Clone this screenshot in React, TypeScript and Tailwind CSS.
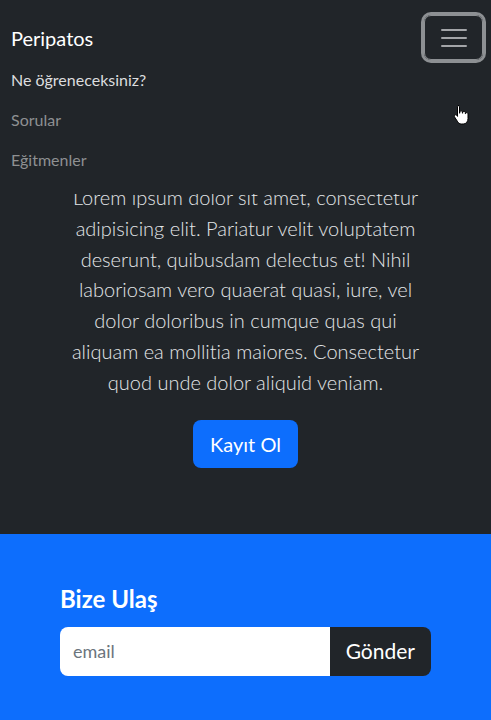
import React from 'react';

const font = { fontFamily: 'Lato, "Open Sans", sans-serif' };

function HandCursor() {
  return (
    <svg viewBox="0 0 16 22" className="absolute left-[453px] top-[104px] h-[22px] w-[16px]" aria-hidden="true">
      <path
        d="M5 1.5c.8 0 1.5.6 1.5 1.5v6.2h.3V8c0-.8.6-1.3 1.3-1.3s1.3.5 1.3 1.3v1.2h.3v-.7c0-.8.6-1.3 1.3-1.3s1.3.5 1.3 1.3v1.2h.3c0-.8.6-1.2 1.2-1.2s1.2.5 1.2 1.3v4.7c0 3-1.8 5.5-4.8 5.5H8.3c-1.7 0-2.7-.9-3.6-2.2L1.6 13c-.5-.7-.3-1.6.4-2 .6-.4 1.4-.2 1.8.4l.7 1V3c0-.9.7-1.5 1.5-1.5z"
        fill="#fff"
        stroke="#000"
        strokeWidth="1"
      />
    </svg>
  );
}

function Navbar() {
  return (
    <nav className="absolute left-0 right-0 top-0 bg-[#212529] px-[11px] pb-[14px] pt-[15px]">
      <div className="flex items-center justify-between">
        <span className="text-[20px] leading-[30px] text-white">Peripatos</span>
        <button className="mr-[-3px] flex h-[45px] w-[59px] items-center justify-center rounded-[7px] border border-[#8d9093] ring-[3px] ring-[#8d9093]">
          <svg viewBox="0 0 30 30" className="h-[30px] w-[30px]" aria-hidden="true">
            <path d="M3 7h24M3 15h24M3 23h24" stroke="#a3a5a8" strokeWidth="2" strokeLinecap="round" />
          </svg>
        </button>
      </div>
      <ul className="flex flex-col text-[16px]">
        <li className="py-[8px] leading-[24px] text-[#dcdddf]">Ne öğreneceksiniz?</li>
        <li className="py-[8px] leading-[24px] text-[#8e9092]">Sorular</li>
        <li className="py-[8px] leading-[24px] text-[#8e9092]">Eğitmenler</li>
      </ul>
    </nav>
  );
}

export default function App() {
  return (
    <div className="relative min-h-[720px] w-full overflow-hidden bg-[#0d6efd] [font-variant-ligatures:none]" style={font}>
      <section className="bg-[#212529] pb-[66px] pt-[182px] text-center">
        <p className="mx-auto w-[360px] text-[20px] font-light leading-[30.8px] text-[#e3e5e8]">
          Lorem ipsum dolor sit amet, consectetur adipisicing elit. Pariatur velit voluptatem deserunt, quibusdam
          delectus et! Nihil laboriosam vero quaerat quasi, iure, vel dolor doloribus in cumque quas qui aliquam ea
          mollitia maiores. Consectetur quod unde dolor aliquid veniam.
        </p>
        <button className="mt-[22px] h-[48px] rounded-[8px] bg-[#0d6efd] px-[17px] text-[20px] text-white">
          Kayıt Ol
        </button>
      </section>
      <section className="px-[60px] pb-[48px] pt-[50px]">
        <h3 className="mb-[14px] text-[24px] font-bold leading-[29px] text-white">Bize Ulaş</h3>
        <div className="flex h-[49px] w-[371px]">
          <input
            placeholder="email"
            className="min-w-0 flex-1 rounded-l-[8px] bg-white px-[13px] text-[18px] text-gray-900 outline-none placeholder:text-[#6c757d]"
          />
          <button className="rounded-r-[8px] bg-[#212529] px-[16px] text-[21px] text-white">Gönder</button>
        </div>
      </section>
      <Navbar />
      <HandCursor />
    </div>
  );
}
